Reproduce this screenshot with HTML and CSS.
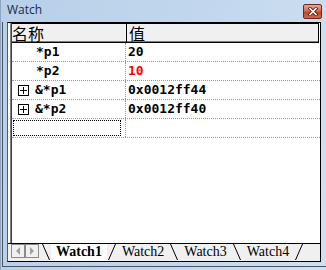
FILE: index.html
```html
<!DOCTYPE html>
<html>
<head>
<meta charset="utf-8">
<link rel="stylesheet" href="styles.css">
</head>
<body>
<div class="window">
  <div class="titlebar">
    <span class="title">Watch</span>
    <span class="close"><svg width="10" height="9" viewBox="0 0 10 9"><path d="M2 1.5 L8 7.5 M8 1.5 L2 7.5" stroke="#5a1a10" stroke-width="3.2" stroke-linecap="square"/><path d="M2 1.5 L8 7.5 M8 1.5 L2 7.5" stroke="#fff" stroke-width="1.6" stroke-linecap="square"/></svg></span>
  </div>
  <div class="frame">
    <div class="panel">
      <div class="list">
        <div class="head">
          <div class="hcell name">名称</div>
          <div class="hcell value">值</div>
        </div>
        <div class="row">
          <div class="cell name"><span class="indent"></span>*p1</div>
          <div class="cell value">20</div>
        </div>
        <div class="row">
          <div class="cell name"><span class="indent"></span>*p2</div>
          <div class="cell value red">10</div>
        </div>
        <div class="row">
          <div class="cell name"><span class="plus"></span>&amp;*p1</div>
          <div class="cell value">0x0012ff44</div>
        </div>
        <div class="row">
          <div class="cell name"><span class="plus"></span>&amp;*p2</div>
          <div class="cell value">0x0012ff40</div>
        </div>
        <div class="row">
          <div class="cell name"><span class="focus"></span></div>
          <div class="cell value"></div>
        </div>
      </div>
      <div class="tabbar">
        <div class="arrows">
          <span class="arrow"><svg width="6" height="8" viewBox="0 0 6 8"><path d="M5 0 L1 4 L5 8 Z" fill="#a0a0a0"/></svg></span>
          <span class="arrow"><svg width="6" height="8" viewBox="0 0 6 8"><path d="M1 0 L5 4 L1 8 Z" fill="#a0a0a0"/></svg></span>
        </div>
        <div class="tabs">
          <svg class="sep" width="10" height="16" viewBox="0 0 10 16"><path d="M1.5 0 L8.5 16" stroke="#000" stroke-width="1"/></svg>
          <span class="tab active">Watch1</span>
          <svg class="sep" width="10" height="16" viewBox="0 0 10 16"><path d="M8.5 0 L1.5 16" stroke="#000" stroke-width="1"/></svg>
          <span class="tab">Watch2</span>
          <svg class="sep" width="10" height="16" viewBox="0 0 10 16"><path d="M1.5 0 L8.5 16" stroke="#000" stroke-width="1"/></svg>
          <span class="tab">Watch3</span>
          <svg class="sep" width="10" height="16" viewBox="0 0 10 16"><path d="M1.5 0 L8.5 16" stroke="#000" stroke-width="1"/></svg>
          <span class="tab">Watch4</span>
          <svg class="sep" width="10" height="16" viewBox="0 0 10 16"><path d="M8.5 0 L1.5 16" stroke="#000" stroke-width="1"/></svg>
        </div>
      </div>
    </div>
  </div>
</div>
</body>
</html>
```
FILE: styles.css
```css
html, body { margin: 0; padding: 0; }
body { width: 326px; height: 270px; overflow: hidden; }
.window {
  width: 326px; height: 270px; box-sizing: border-box;
  background: linear-gradient(100deg, #b7cfe8 0%, #c3d8ee 60%, #cfe0f2 100%);
  border-left: 1px solid #8fa6c0;
  display: flex; flex-direction: column;
}
.titlebar {
  height: 22px; display: flex; align-items: flex-start; justify-content: space-between;
  flex: none;
}
.title {
  font-family: "Open Sans", "DejaVu Sans", sans-serif; font-size: 12px; color: #1b2b44;
  padding: 3px 0 0 6px; line-height: 14px;
}
.close {
  margin: 4px 4px 0 0; width: 19px; height: 15px; box-sizing: border-box;
  border: 1px solid #6b2a20; border-radius: 2px;
  background: linear-gradient(#e8a493 0%, #d5704f 45%, #c24428 55%, #d0674a 100%);
  display: flex; align-items: center; justify-content: center;
}
.frame {
  flex: 1; display: flex; flex-direction: column;
  margin: 0 0 3px 1px;
  border-left: 1px solid #4a5564;
  border-bottom: 1px solid #4a5564;
  padding: 0 0 4px 4px;
}
.panel {
  flex: 1; display: flex; flex-direction: column;
  border-left: 1px solid #595959;
  border-top: 1px solid #000;
  border-right: 1px solid #000;
  border-bottom: 1px solid #000;
  margin-right: 5px;
  background: #fff;
}
.list {
  flex: 1; background: #fff;
  border-left: 2px solid #fff;
  display: flex; flex-direction: column;
  box-shadow: inset 1px 0 0 #808080, inset 2px 0 0 #404040;
  padding-left: 2px;
}
.head {
  display: flex; height: 18px; background: #f0f0f0;
  border-top: 1px solid #000; border-bottom: 1px solid #000;
  box-shadow: inset 0 -1px 0 #808080;
  margin-right: 1px;
  border-right: 1px solid #000;
}
.hcell {
  font-family: "Noto Sans CJK SC", "DejaVu Sans", sans-serif; font-size: 16px; line-height: 18px;
  color: #000; padding-left: 0; white-space: nowrap;
}
.hcell.name { width: 114px; border-right: 1px solid #000; }
.hcell.value { padding-left: 2px; }
.row { display: flex; height: 18px; border-bottom: 1px dotted #9a9a9a; }
.cell {
  font-family: "DejaVu Sans Mono", "Liberation Mono", monospace; font-weight: bold;
  font-size: 13px; line-height: 18px; color: #000; display: flex; align-items: center;
}
.cell.name { width: 113px; border-right: 1px dotted #9a9a9a; }
.cell.value { padding-left: 2px; }
.red { color: #ff0000; }
.indent { width: 24px; flex: none; }
.plus {
  width: 11px; height: 11px; box-sizing: border-box; border: 1px solid #000; flex: none;
  margin: 0 6px 0 6px;
  background:
    linear-gradient(#000, #000) center / 7px 1px no-repeat,
    linear-gradient(#000, #000) center / 1px 7px no-repeat;
}
.focus {
  width: 108px; height: 16px; box-sizing: border-box; border: 1px dotted #000; margin-left: 1px;
}
.tabbar {
  height: 17px; flex: none; display: flex; align-items: stretch;
  background: #f0f0f0; border-top: 1px solid #000;
  padding-left: 3px;
}
.arrows { display: flex; }
.arrow {
  width: 14px; height: 14px; box-sizing: border-box; border: 1px solid #8a8a8a;
  background: #f0f0f0; display: flex; align-items: center; justify-content: center;
}
.tabs { display: flex; align-items: stretch; margin-left: 2px; }
.sep { display: block; flex: none; }
.tab {
  font-family: "Liberation Serif", serif; font-size: 14px; line-height: 16px; color: #000;
  padding: 0 5px;
}
.tab.active { font-weight: bold; background: #fff; }
```
